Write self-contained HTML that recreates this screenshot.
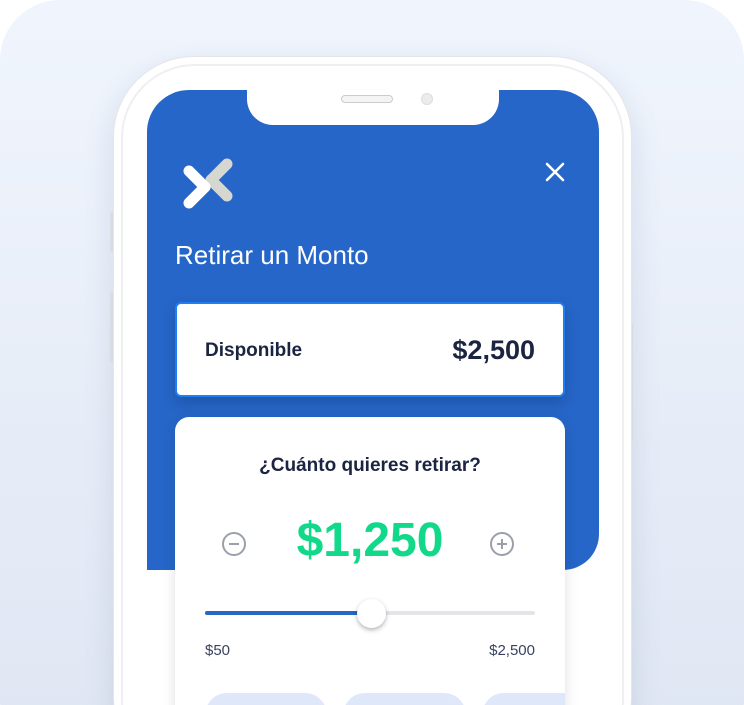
<!DOCTYPE html>
<html style="width:744px;height:705px;overflow:hidden"><head><meta charset="utf-8"><style>
*{margin:0;padding:0;box-sizing:border-box}
body{width:744px;height:705px;overflow:hidden;background:#fff;font-family:"Liberation Sans",sans-serif;position:relative}
.bg{position:absolute;left:0;top:0;width:744px;height:760px;border-radius:60px;background:linear-gradient(180deg,#f0f5fd 0%,#e6ecf7 60%,#dfe6f3 100%)}
.btn{position:absolute;width:5px;background:#e4e6ea;border-radius:2px}
.phone{position:absolute;left:114px;top:57px;width:517px;height:720px;border-radius:80px;background:#fff;box-shadow:0 0 0 1px #e4e6ea,0 10px 30px rgba(90,110,150,.18);}
.phone2{position:absolute;left:121px;top:64px;width:503px;height:710px;border-radius:74px;border:2px solid #eeeff1}
.screen{position:absolute;left:147px;top:90px;width:452px;height:615px;border-radius:42px 42px 0 0;background:#fff;overflow:hidden}
.blue{position:absolute;left:0;top:0;width:452px;height:480px;background:#2666c8;border-radius:0 0 36px 0}
.notch{position:absolute;left:100px;top:-2px;width:252px;height:37px;background:#fff;border-radius:0 0 26px 26px}
.spk{position:absolute;left:94px;top:7px;width:52px;height:8px;border:1px solid #c9cbcf;border-radius:5px;background:#f4f4f5}
.cam{position:absolute;left:174px;top:5px;width:12px;height:12px;border-radius:50%;background:#ececee;border:1px solid #ddd}
.title{position:absolute;left:28px;top:150px;color:#fff;font-size:26px}
.card1{position:absolute;left:28px;top:212px;width:390px;height:95px;background:#fff;border:2px solid #1e7ef2;border-radius:6px;box-shadow:0 6px 14px rgba(0,0,30,.18)}
.card2{position:absolute;left:28px;top:327px;width:390px;height:420px;background:#fff;border-radius:14px;box-shadow:0 4px 14px rgba(0,0,40,.12);overflow:hidden}
.dark{color:#1b2440}
</style></head><body>
<div class="bg"></div>
<div class="btn" style="left:110px;top:212px;height:40px"></div>
<div class="btn" style="left:110px;top:292px;height:70px"></div>
<div class="btn" style="left:628px;top:322px;height:120px"></div>
<div class="phone"></div>
<div class="phone2"></div>
<div class="screen">
 <div class="blue"></div>
 <div class="notch"><div class="spk"></div><div class="cam"></div></div>
 <svg style="position:absolute;left:34px;top:64px" width="54" height="60" viewBox="0 0 54 60">
  <line x1="46" y1="10" x2="30" y2="26" stroke="#d5d7d0" stroke-width="11" stroke-linecap="round"/>
  <line x1="30" y1="26" x2="46" y2="42" stroke="#d5d7d0" stroke-width="11" stroke-linecap="round"/>
  <line x1="8" y1="17" x2="24" y2="33" stroke="#fff" stroke-width="11" stroke-linecap="round"/>
  <line x1="24" y1="33" x2="8" y2="49" stroke="#fff" stroke-width="11" stroke-linecap="round"/>
 </svg>
 <svg style="position:absolute;left:397px;top:71px" width="22" height="22" viewBox="0 0 22 22"><path d="M3 3L19 19M19 3L3 19" stroke="#fff" stroke-width="2.6" stroke-linecap="round"/></svg>
 <div class="title">Retirar un Monto</div>
 <div class="card1">
  <div class="dark" style="position:absolute;left:28px;top:36px;font-size:19px;font-weight:bold">Disponible</div>
  <div class="dark" style="position:absolute;right:28px;top:31px;font-size:27px;font-weight:bold">$2,500</div>
 </div>
 <div class="card2">
  <div class="dark" style="position:absolute;left:0;width:390px;top:38px;text-align:center;font-size:19px;font-weight:bold">¿Cuánto quieres retirar?</div>
  <svg style="position:absolute;left:46px;top:114px" width="26" height="26"><circle cx="13" cy="13" r="11" fill="none" stroke="#9aa0ab" stroke-width="2"/><path d="M8 13H18" stroke="#9aa0ab" stroke-width="2"/></svg>
  <svg style="position:absolute;left:314px;top:114px" width="26" height="26"><circle cx="13" cy="13" r="11" fill="none" stroke="#9aa0ab" stroke-width="2"/><path d="M8 13H18M13 8V18" stroke="#9aa0ab" stroke-width="2"/></svg>
  <div style="position:absolute;left:0;width:390px;top:96px;text-align:center;font-size:48px;font-weight:bold;color:#12d98a">$1,250</div>
  <div style="position:absolute;left:30px;top:194px;width:330px;height:4px;border-radius:2px;background:#e4e5e8"></div>
  <div style="position:absolute;left:30px;top:194px;width:167px;height:4px;border-radius:2px;background:#2666c8"></div>
  <div style="position:absolute;left:182px;top:182px;width:29px;height:29px;border-radius:50%;background:#fff;box-shadow:0 2px 5px rgba(0,0,0,.3)"></div>
  <div class="dark" style="position:absolute;left:30px;top:225px;font-size:15px;color:#3a4260">$50</div>
  <div class="dark" style="position:absolute;right:30px;top:225px;font-size:15px;color:#3a4260">$2,500</div>
  <div style="position:absolute;left:30px;top:276px;width:122px;height:50px;border-radius:22px;background:#dfe8fb"></div>
  <div style="position:absolute;left:168px;top:276px;width:123px;height:50px;border-radius:22px;background:#dfe8fb"></div>
  <div style="position:absolute;left:307px;top:276px;width:123px;height:50px;border-radius:22px;background:#dfe8fb"></div>
 </div>
</div>
</body></html>
